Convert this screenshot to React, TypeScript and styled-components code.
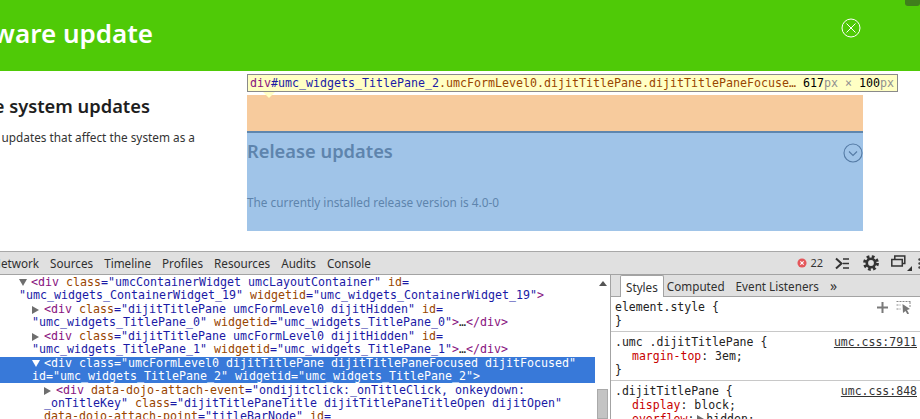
import React from 'react';
import styled, { createGlobalStyle } from 'styled-components';

const MONO = `'DejaVu Sans Mono', monospace`;
const SANS = `'Noto Sans', 'Open Sans', sans-serif`;

type Token = { t: string; c?: 'tag' | 'attr' | 'val' | 'plain' };

const tag = (t: string): Token => ({ t, c: 'tag' });
const attr = (t: string): Token => ({ t, c: 'attr' });
const val = (t: string): Token => ({ t, c: 'val' });

const nodes: {
    indent: number;
    open: boolean;
    selected?: boolean;
    lines: Token[][];
}[] = [
    {
        indent: 19,
        open: true,
        lines: [
            [tag('<div'), { t: ' ' }, attr('class'), val('="umcContainerWidget umcLayoutContainer"'), { t: ' ' }, attr('id'), val('=')],
            [val('"umc_widgets_ContainerWidget_19"'), { t: ' ' }, attr('widgetid'), val('="umc_widgets_ContainerWidget_19"'), tag('>')],
        ],
    },
    {
        indent: 32,
        open: false,
        lines: [
            [tag('<div'), { t: ' ' }, attr('class'), val('="dijitTitlePane umcFormLevel0 dijitHidden"'), { t: ' ' }, attr('id'), val('=')],
            [val('"umc_widgets_TitlePane_0"'), { t: ' ' }, attr('widgetid'), val('="umc_widgets_TitlePane_0"'), tag('>'), { t: '…' }, tag('</div>')],
        ],
    },
    {
        indent: 32,
        open: false,
        lines: [
            [tag('<div'), { t: ' ' }, attr('class'), val('="dijitTitlePane umcFormLevel0 dijitHidden"'), { t: ' ' }, attr('id'), val('=')],
            [val('"umc_widgets_TitlePane_1"'), { t: ' ' }, attr('widgetid'), val('="umc_widgets_TitlePane_1"'), tag('>'), { t: '…' }, tag('</div>')],
        ],
    },
    {
        indent: 32,
        open: true,
        selected: true,
        lines: [
            [{ t: '<div class="umcFormLevel0 dijitTitlePane dijitTitlePaneFocused dijitFocused"' }],
            [{ t: 'id="umc_widgets_TitlePane_2" widgetid="umc_widgets_TitlePane_2">' }],
        ],
    },
    {
        indent: 44,
        open: false,
        lines: [
            [tag('<div'), { t: ' ' }, attr('data-dojo-attach-event'), val('="ondijitclick:_onTitleClick, onkeydown:')],
            [val('_onTitleKey"'), { t: ' ' }, attr('class'), val('="dijitTitlePaneTitle dijitTitlePaneTitleOpen dijitOpen"')],
            [attr('data-dojo-attach-point'), val('="titleBarNode"'), { t: ' ' }, attr('id'), val('=')],
        ],
    },
];

const tabs = ['Network', 'Sources', 'Timeline', 'Profiles', 'Resources', 'Audits', 'Console'];

const App: React.FC = () => {
    return (
        <Viewport>
            <GlobalStyle />
            <Page>
                <Banner>
                    <BannerTitle>Software update</BannerTitle>
                    <CloseIcon viewBox="0 0 20 20">
                        <circle cx="10" cy="10" r="9" />
                        <path d="M5.5 5.5 14.5 14.5M14.5 5.5 5.5 14.5" />
                    </CloseIcon>
                    <CornerTab />
                </Banner>
                <Content>
                    <LeftColumn>
                        <SectionHeading>The system updates</SectionHeading>
                        <SectionText>All updates that affect the system as a</SectionText>
                    </LeftColumn>
                    <Inspected>
                        <MarginBox />
                        <PaneBox>
                            <PaneHeader>
                                <PaneTitle>Release updates</PaneTitle>
                                <ChevronIcon viewBox="0 0 20 20">
                                    <circle cx="10" cy="10" r="9" />
                                    <path d="M6 8.5 10 12.5 14 8.5" />
                                </ChevronIcon>
                            </PaneHeader>
                            <PaneText>The currently installed release version is 4.0-0</PaneText>
                        </PaneBox>
                        <Tooltip>
                            <TipName>div</TipName>
                            <TipId>#umc_widgets_TitlePane_2</TipId>
                            <TipClass>.umcFormLevel0.dijitTitlePane.dijitTitlePaneFocuse…</TipClass>
                            <TipSize>
                                617<TipUnit>px</TipUnit> <TipUnit>×</TipUnit> 100<TipUnit>px</TipUnit>
                            </TipSize>
                        </Tooltip>
                    </Inspected>
                </Content>
            </Page>
            <DevTools>
                <Toolbar>
                    <TabList>
                        {tabs.map((name) => (
                            <ToolTab key={name}>{name}</ToolTab>
                        ))}
                    </TabList>
                    <ToolActions>
                        <ErrorCount>
                            <ErrorDot viewBox="0 0 11 11">
                                <circle cx="5.5" cy="5.5" r="5" />
                                <path d="M3.7 3.7 7.3 7.3M7.3 3.7 3.7 7.3" />
                            </ErrorDot>
                            22
                        </ErrorCount>
                        <ToolIcon width="16" height="13" viewBox="0 0 16 13">
                            <path d="M1 1.5 6.5 6.5 1 11.5" fill="none" stroke="#333" strokeWidth="2" />
                            <path d="M8 2h6M8 6.5h6M8 11h6" fill="none" stroke="#333" strokeWidth="1.6" />
                        </ToolIcon>
                        <ToolIcon width="16" height="16" viewBox="0 0 16 16">
                            <circle cx="8" cy="8" r="6.2" fill="none" stroke="#333" strokeWidth="3.4" strokeDasharray="2.6 2.27" />
                            <circle cx="8" cy="8" r="4.2" fill="none" stroke="#333" strokeWidth="2.6" />
                        </ToolIcon>
                        <ToolIcon width="21" height="16" viewBox="0 0 21 16">
                            <path d="M3.8 4V1h10v7.5h-2.500" fill="none" stroke="#333" strokeWidth="1.5" />
                            <path d="M.8 4.500h10.500v6.500H.8z" fill="none" stroke="#333" strokeWidth="1.5" />
                            <path d="M16 16l5-5v5z" fill="#333" />
                        </ToolIcon>
                        <MoreDots width="3" height="11" viewBox="0 0 3 11">
                            <circle cx="1.5" cy="1.5" r="1.2" />
                            <circle cx="1.5" cy="5.5" r="1.2" />
                            <circle cx="1.5" cy="9.5" r="1.2" />
                        </MoreDots>
                    </ToolActions>
                </Toolbar>
                <Panels>
                    <ElementsPanel>
                        <Tree>
                            {nodes.map((node, i) => (
                                <TreeNode key={i} $indent={node.indent} $selected={node.selected}>
                                    <Arrow $open={node.open} $selected={node.selected} />
                                    {node.lines.map((line, j) => (
                                        <TreeLine key={j} $first={j === 0}>
                                            {line.map((token, k) => (
                                                <Code key={k} $kind={token.c} $selected={node.selected}>
                                                    {token.t}
                                                </Code>
                                            ))}
                                        </TreeLine>
                                    ))}
                                </TreeNode>
                            ))}
                        </Tree>
                        <Scrollbar>
                            <ScrollUp />
                            <ScrollThumb />
                        </Scrollbar>
                    </ElementsPanel>
                    <SidePanel>
                        <SideTabs>
                            <SideTab $active>Styles</SideTab>
                            <SideTab>Computed</SideTab>
                            <SideTab>Event Listeners</SideTab>
                            <MoreTabs>»</MoreTabs>
                        </SideTabs>
                        <Rule>
                            <RuleHead>
                                <span>element.style {'{'}</span>
                                <RuleTools>
                                    <PlusIcon width="11" height="11" viewBox="0 0 11 11">
                                        <path d="M5.5 0v11M0 5.5h11" />
                                    </PlusIcon>
                                    <PickerIcon width="15" height="13" viewBox="0 0 15 13">
                                        <path d="M.5.5h14M.5 4h4M.5 8h4M14 1v5" strokeDasharray="2 1" />
                                        <path d="M6.5 3 14 8l-3 1 2 3.500-1.500 1L9.500 10 7 12z" className="fill" />
                                    </PickerIcon>
                                </RuleTools>
                            </RuleHead>
                            <RuleLine>{'}'}</RuleLine>
                        </Rule>
                        <Rule>
                            <RuleHead>
                                <span>.umc .dijitTitlePane {'{'}</span>
                                <RuleSource>umc.css:7911</RuleSource>
                            </RuleHead>
                            <RuleProp>
                                <PropName>margin-top</PropName>: 3em;
                            </RuleProp>
                            <RuleLine>{'}'}</RuleLine>
                        </Rule>
                        <Rule>
                            <RuleHead>
                                <span>.dijitTitlePane {'{'}</span>
                                <RuleSource>umc.css:848</RuleSource>
                            </RuleHead>
                            <RuleProp>
                                <PropName>display</PropName>: block;
                            </RuleProp>
                            <RuleProp>
                                <PropName>overflow</PropName>:<PropArrow />hidden;
                            </RuleProp>
                        </Rule>
                    </SidePanel>
                </Panels>
            </DevTools>
        </Viewport>
    );
};

const GlobalStyle = createGlobalStyle`
    html, body {
        margin: 0;
        padding: 0;
        background: #fff;
    }
`;

const Viewport = styled.div`
    width: 920px;
    height: 419px;
    overflow: hidden;
    display: flex;
    flex-direction: column;
    background: #fff;
`;

const Page = styled.div`
    height: 251px;
    flex: none;
    display: flex;
    flex-direction: column;
`;

const Banner = styled.header`
    height: 71px;
    flex: none;
    background: #4fca07;
    display: flex;
    align-items: center;
    justify-content: flex-end;
    position: relative;
    overflow: hidden;
`;

const BannerTitle = styled.h1`
    margin: 0 auto 5px 0;
    width: 153px;
    flex: none;
    display: flex;
    justify-content: flex-end;
    white-space: nowrap;
    color: #fff;
    font: 600 26px ${SANS};
`;

const CloseIcon = styled.svg`
    width: 20px;
    height: 20px;
    margin: 0 59px 15px 0;
    fill: none;
    stroke: #fff;
    stroke-width: 1;
`;

const CornerTab = styled.div`
    position: absolute;
    top: -6px;
    right: 0;
    width: 15px;
    height: 12px;
    border-radius: 3px;
    background: #3f7f1c;
`;

const Content = styled.div`
    flex: 1;
    display: flex;
`;

const LeftColumn = styled.section`
    width: 247px;
    flex: none;
    overflow: hidden;
    display: flex;
    flex-direction: column;
    align-items: flex-end;
    padding-top: 23px;
    box-sizing: border-box;
    white-space: nowrap;
    color: #1e1e1e;
`;

const SectionHeading = styled.h2`
    margin: 0 97px 0 0;
    font: 600 18.3px/24px ${SANS};
`;

const SectionText = styled.p`
    margin: 11px 52px 0 0;
    font: 400 11.8px/16px ${SANS};
    color: #333;
`;

const Inspected = styled.div`
    width: 616px;
    flex: none;
    padding-top: 24px;
    position: relative;
`;

const MarginBox = styled.div`
    height: 36px;
    background: #f7cb9d;
`;

const PaneBox = styled.div`
    height: 100px;
    box-sizing: border-box;
    background: #a0c4e8;
    border-top: 2px solid #5f86ad;
    color: #5e84ad;
`;

const PaneHeader = styled.div`
    display: flex;
    align-items: flex-start;
    justify-content: space-between;
    padding-top: 6px;
`;

const PaneTitle = styled.div`
    font: 600 18.3px/24px ${SANS};
`;

const ChevronIcon = styled.svg`
    width: 20px;
    height: 20px;
    margin: 4px 0 0;
    fill: none;
    stroke: #557ba5;
    stroke-width: 1.1;
`;

const PaneText = styled.p`
    margin: 31px 0 0;
    font: 400 11.8px/16px ${SANS};
`;

const Tooltip = styled.div`
    position: absolute;
    left: 0;
    top: 3px;
    width: 651px;
    height: 18px;
    box-sizing: border-box;
    padding: 0 3px 0 2px;
    display: flex;
    align-items: center;
    background: #ffffc4;
    border: 1px solid #8a8a8a;
    font: 11.63px/16px ${MONO};
    white-space: nowrap;

    &::after {
        content: '';
        position: absolute;
        left: 15px;
        bottom: -7px;
        width: 0;
        height: 0;
        border-left: 6px solid transparent;
        border-right: 6px solid transparent;
        border-top: 6px solid #ffffc4;
    }
`;

const TipName = styled.span`
    color: #881280;
`;

const TipId = styled.span`
    color: #1a1aa6;
`;

const TipClass = styled.span`
    color: #994500;
`;

const TipSize = styled.span`
    margin-left: auto;
    color: #000;
`;

const TipUnit = styled.span`
    color: #909090;
`;

const DevTools = styled.div`
    flex: 1;
    min-height: 0;
    display: flex;
    flex-direction: column;
`;

const Toolbar = styled.div`
    height: 24px;
    flex: none;
    box-sizing: border-box;
    display: flex;
    align-items: center;
    justify-content: space-between;
    background: #e0e0e0;
    border-top: 1px solid #a8a8a8;
    border-bottom: 1px solid #a3a3a3;
`;

const TabList = styled.div`
    display: flex;
    gap: 11px;
    margin-left: -8px;
`;

const ToolTab = styled.span`
    font: 400 11.7px/22px ${SANS};
    color: #303030;
`;

const ToolActions = styled.div`
    display: flex;
    align-items: center;
    gap: 12px;
    margin-right: -1px;
`;

const ErrorCount = styled.span`
    display: flex;
    align-items: center;
    gap: 3px;
    font: 400 11px/22px ${SANS};
    color: #333;
`;

const ErrorDot = styled.svg`
    width: 10px;
    height: 10px;
    circle {
        fill: #e4575b;
    }
    path {
        stroke: #fff;
        stroke-width: 1.2;
    }
`;

const ToolIcon = styled.svg`
    flex: none;
`;

const MoreDots = styled.svg`
    flex: none;
    margin-left: -6px;
    fill: #444;
`;

const Panels = styled.div`
    flex: 1;
    min-height: 0;
    display: flex;
`;

const ElementsPanel = styled.div`
    width: 610px;
    flex: none;
    display: flex;
    border-right: 1px solid #a3a3a3;
`;

const Tree = styled.div`
    flex: 1;
    min-width: 0;
    overflow: hidden;
    font: 11.63px/13px ${MONO};
    white-space: pre;
`;

const TreeNode = styled.div<{ $indent: number; $selected?: boolean }>`
    position: relative;
    margin-top: 1px;
    padding-left: ${(p) => p.$indent}px;
    background: ${(p) => (p.$selected ? '#3879d9' : 'transparent')};
`;

const TreeLine = styled.div<{ $first: boolean }>`
    height: 13px;
    text-indent: ${(p) => (p.$first ? '12px' : '0')};
`;

const Arrow = styled.span<{ $open: boolean; $selected?: boolean }>`
    position: absolute;
    top: 3px;
    margin-left: 0;
    width: 0;
    height: 0;
    ${(p) =>
        p.$open
            ? `border-left: 4px solid transparent; border-right: 4px solid transparent; border-top: 7px solid ${p.$selected ? '#fff' : '#6e6e6e'};`
            : `border-top: 4px solid transparent; border-bottom: 4px solid transparent; border-left: 7px solid #6e6e6e;`}
`;

const kindColors = {
    tag: '#881280',
    attr: '#994500',
    val: '#1a1aa6',
    plain: '#222',
};

const Code = styled.span<{ $kind?: Token['c']; $selected?: boolean }>`
    color: ${(p) => (p.$selected ? '#fff' : kindColors[p.$kind ?? 'plain'])};
`;

const Scrollbar = styled.div`
    width: 15px;
    flex: none;
    background: #fff;
    display: flex;
    flex-direction: column;
    align-items: center;
    padding-top: 6px;
    box-sizing: border-box;
`;

const ScrollUp = styled.span`
    width: 0;
    height: 0;
    border-left: 4px solid transparent;
    border-right: 4px solid transparent;
    border-bottom: 5px solid #555;
`;

const ScrollThumb = styled.div`
    width: 11px;
    flex: 1;
    margin-top: 103px;
    background: #c4c4c4;
    border: 1px solid #aaa;
    box-sizing: border-box;
`;

const SidePanel = styled.div`
    flex: 1;
    min-width: 0;
    overflow: hidden;
    font: 11.5px/14px ${MONO};
    color: #222;
`;

const SideTabs = styled.div`
    height: 22px;
    box-sizing: border-box;
    display: flex;
    align-items: flex-end;
    gap: 11px;
    padding-left: 9px;
    background: #e0e0e0;
    border-bottom: 1px solid #a3a3a3;
`;

const SideTab = styled.span<{ $active?: boolean }>`
    font: 400 11.7px/23px ${SANS};
    color: #303030;
    height: 21px;
    ${(p) =>
        p.$active &&
        `
        padding: 0 5px;
        margin-bottom: -1px;
        margin-right: -8px;
        background: #fff;
        border: 1px solid #a3a3a3;
        border-bottom: none;
        border-radius: 2px 2px 0 0;
        box-sizing: content-box;
    `}
`;

const MoreTabs = styled.span`
    font: 400 14px/21px ${SANS};
    color: #333;
`;

const Rule = styled.div`
    padding: 2px 3px 3px 4px;
    border-bottom: 1px solid #c8c8c8;
`;

const RuleHead = styled.div`
    display: flex;
    justify-content: space-between;
    align-items: center;
    height: 14px;
    margin-top: 1px;
`;

const RuleLine = styled.div`
    height: 14px;
`;

const RuleProp = styled.div`
    height: 14px;
    padding-left: 17px;
`;

const RuleTools = styled.span`
    display: flex;
    align-items: center;
    gap: 8px;
    margin-right: 6px;
`;

const PlusIcon = styled.svg`
    stroke: #7a7a7a;
    stroke-width: 2;
`;

const PickerIcon = styled.svg`
    fill: none;
    stroke: #888;
    .fill {
        fill: #777;
        stroke: none;
    }
`;

const RuleSource = styled.span`
    color: #333;
    text-decoration: underline;
`;

const PropName = styled.span`
    color: #c80000;
`;

const PropArrow = styled.span`
    display: inline-block;
    width: 0;
    height: 0;
    margin: 0 2px 0 3px;
    border-top: 4px solid transparent;
    border-bottom: 4px solid transparent;
    border-left: 7px solid #6e6e6e;
`;

export default App;
